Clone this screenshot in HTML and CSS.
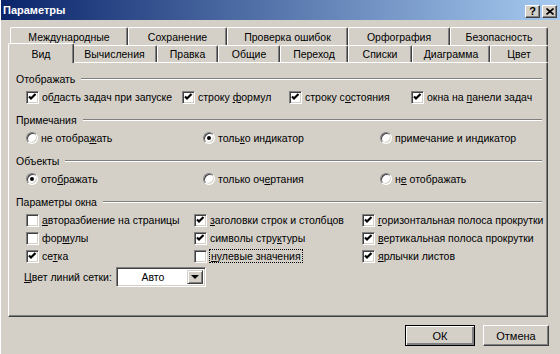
FILE: index.html
```html
<!DOCTYPE html>
<html lang="ru">
<head>
    <meta charset="UTF-8">
    <title>Параметры</title>
    <link rel="stylesheet" href="styles.css">
</head>
<body>
    <div class="window">
        <div class="titlebar">
            <span class="title">Параметры</span>
            <div class="caption-btns">
                <span class="cap-btn help">?</span>
                <span class="cap-btn close">
                    <svg width="8" height="7" viewBox="0 0 8 7"><path d="M0.5 0.5 L7.5 6.5 M7.5 0.5 L0.5 6.5" stroke="#000" stroke-width="1.6"/></svg>
                </span>
            </div>
        </div>

        <div class="tabs">
            <div class="tab-row back">
                <div class="tab">Международные</div>
                <div class="tab">Сохранение</div>
                <div class="tab">Проверка ошибок</div>
                <div class="tab">Орфография</div>
                <div class="tab">Безопасность</div>
            </div>
            <div class="tab-row front">
                <div class="tab active">Вид</div>
                <div class="tab">Вычисления</div>
                <div class="tab">Правка</div>
                <div class="tab">Общие</div>
                <div class="tab">Переход</div>
                <div class="tab">Списки</div>
                <div class="tab">Диаграмма</div>
                <div class="tab">Цвет</div>
            </div>
        </div>

        <div class="panel">
            <!-- Отображать -->
            <div class="group">
                <div class="group-head"><span>Отображать</span><i class="rule"></i></div>
                <div class="row cols-show">
                    <label class="opt"><span class="cb on"></span><span>об<u>л</u>асть задач при запуске</span></label>
                    <label class="opt"><span class="cb on"></span><span>строку <u>ф</u>ормул</span></label>
                    <label class="opt"><span class="cb on"></span><span>строку с<u>о</u>стояния</span></label>
                    <label class="opt"><span class="cb on"></span><span>окна на <u>п</u>анели задач</span></label>
                </div>
            </div>

            <!-- Примечания -->
            <div class="group">
                <div class="group-head"><span>Примечания</span><i class="rule"></i></div>
                <div class="row cols-three">
                    <label class="opt"><span class="rb"></span><span>не отобра<u>ж</u>ать</span></label>
                    <label class="opt"><span class="rb on"></span><span>толь<u>к</u>о индикатор</span></label>
                    <label class="opt"><span class="rb"></span><span>примечание и ин<u>д</u>икатор</span></label>
                </div>
            </div>

            <!-- Объекты -->
            <div class="group">
                <div class="group-head"><span>Объекты</span><i class="rule"></i></div>
                <div class="row cols-three">
                    <label class="opt"><span class="rb on"></span><span>ото<u>б</u>ражать</span></label>
                    <label class="opt"><span class="rb"></span><span>только оч<u>е</u>ртания</span></label>
                    <label class="opt"><span class="rb"></span><span>н<u>е</u> отображать</span></label>
                </div>
            </div>

            <!-- Параметры окна -->
            <div class="group">
                <div class="group-head"><span>Параметры окна</span><i class="rule"></i></div>
                <div class="row cols-window">
                    <label class="opt"><span class="cb"></span><span><u>а</u>вторазбиение на страницы</span></label>
                    <label class="opt"><span class="cb on"></span><span><u>з</u>аголовки строк и столбцов</span></label>
                    <label class="opt"><span class="cb on"></span><span><u>г</u>оризонтальная полоса прокрутки</span></label>
                </div>
                <div class="row cols-window">
                    <label class="opt"><span class="cb"></span><span>фор<u>м</u>улы</span></label>
                    <label class="opt"><span class="cb on"></span><span>символы стру<u>к</u>туры</span></label>
                    <label class="opt"><span class="cb on"></span><span><u>в</u>ертикальная полоса прокрутки</span></label>
                </div>
                <div class="row cols-window">
                    <label class="opt"><span class="cb on"></span><span>се<u>т</u>ка</span></label>
                    <label class="opt"><span class="cb"></span><span class="focus"><u>н</u>улевые значения</span></label>
                    <label class="opt"><span class="cb on"></span><span><u>я</u>рлычки листов</span></label>
                </div>
                <div class="color-row">
                    <span><u>Ц</u>вет линий сетки:</span>
                    <div class="combo">
                        <span class="combo-text">Авто</span>
                        <span class="combo-arrow"><i></i></span>
                    </div>
                </div>
            </div>
        </div>

        <div class="buttons">
            <button class="btn default">ОК</button>
            <button class="btn">Отмена</button>
        </div>
    </div>
</body>
</html>
```

FILE: styles.css
```css
* {
    box-sizing: border-box;
    margin: 0;
    padding: 0;
}

body {
    background-color: #d4d0c8;
    font-family: "Liberation Sans", Arial, sans-serif;
    font-size: 10.5px;
    color: #000;
}

.window {
    width: 560px;
    height: 354px;
    background: #d4d0c8;
    border-left: 1px solid #fff;
    overflow: hidden;
}

/* Title bar */
.titlebar {
    height: 20px;
    margin-left: -1px;
    display: flex;
    align-items: center;
    justify-content: space-between;
    padding: 0 3px 0 3px;
    background: linear-gradient(to right, #0a246a, #a6caf0);
}

.title {
    color: #fff;
    font-weight: bold;
    font-size: 11px;
}

.caption-btns {
    display: flex;
    gap: 2px;
    align-self: flex-end;
    margin-bottom: 2px;
}

.cap-btn {
    width: 15px;
    height: 13px;
    display: flex;
    align-items: center;
    justify-content: center;
    background: #d4d0c8;
    border-top: 1px solid #fff;
    border-left: 1px solid #fff;
    border-right: 1px solid #404040;
    border-bottom: 1px solid #404040;
    box-shadow: inset -1px -1px 0 #808080;
    font-weight: bold;
    font-size: 11px;
    line-height: 1;
}

/* Tabs */
.tabs {
    padding: 7px 0 0 9px;
}

.tab-row {
    display: grid;
}

.tab-row.back {
    grid-template-columns: 118px 99px 121px 102px 98px;
    height: 18px;
}

.tab-row.front {
    grid-template-columns: 62px 85px 61px 62px 68px 64px 78px 58px;
    height: 17px;
}

.tab {
    display: flex;
    align-items: center;
    justify-content: center;
    background: #d4d0c8;
    border-top: 1px solid #fff;
    border-left: 1px solid #fff;
    border-right: 1px solid #404040;
    box-shadow: inset -1px 0 0 #808080;
    border-top-left-radius: 2px;
    border-top-right-radius: 2px;
}

.tab.active {
    margin: -2px -2px -1px -2px;
    position: relative;
    z-index: 2;
}

/* Panel */
.panel {
    margin-left: 7px;
    width: 540px;
    height: 255px;
    border-top: 1px solid #fff;
    border-left: 1px solid #fff;
    border-right: 1px solid #404040;
    border-bottom: 1px solid #404040;
    box-shadow: inset -1px -1px 0 #808080;
    padding: 7px 5px 0 7px;
}

.group {
    margin-bottom: 5px;
}

.group-head {
    height: 18px;
    display: flex;
    align-items: center;
}

.rule {
    flex: 1;
    margin-left: 6px;
    border-top: 1px solid #808080;
    border-bottom: 1px solid #fff;
}

.row {
    display: grid;
    height: 18px;
    padding-left: 10px;
    align-items: center;
}

.cols-show {
    grid-template-columns: 156px 107px 122px 1fr;
}

.cols-three {
    grid-template-columns: 177px 177px 1fr;
}

.cols-window {
    grid-template-columns: 168px 168px 1fr;
}

.opt {
    display: flex;
    align-items: center;
    white-space: nowrap;
}

.cb {
    width: 13px;
    height: 13px;
    margin-right: 3px;
    flex: none;
    background: #fff;
    border-top: 1px solid #808080;
    border-left: 1px solid #808080;
    border-right: 1px solid #fff;
    border-bottom: 1px solid #fff;
    box-shadow: inset 1px 1px 0 #404040, inset -1px -1px 0 #d4d0c8;
}

.cb.on {
    background: #fff url("data:image/svg+xml;utf8,<svg xmlns='http://www.w3.org/2000/svg' width='11' height='11'><path d='M2 4.5 L4 6.5 L8.5 2' fill='none' stroke='black' stroke-width='2.2'/></svg>") center no-repeat;
}

.rb {
    width: 12px;
    height: 12px;
    margin-right: 3px;
    flex: none;
    border-radius: 50%;
    background: #fff;
    border-top: 1px solid #808080;
    border-left: 1px solid #808080;
    border-right: 1px solid #fff;
    border-bottom: 1px solid #fff;
    box-shadow: inset 1px 1px 0 #404040, inset -1px -1px 0 #d4d0c8;
    display: flex;
    align-items: center;
    justify-content: center;
}

.rb.on::after {
    content: "";
    width: 4px;
    height: 4px;
    border-radius: 50%;
    background: #000;
}

.focus {
    outline: 1px dotted #000;
    padding: 0 1px;
}

.color-row {
    display: flex;
    align-items: center;
    height: 22px;
    margin-top: 1px;
    padding-left: 8px;
    gap: 4px;
}

.combo {
    width: 90px;
    height: 20px;
    display: flex;
    background: #fff;
    border-top: 1px solid #808080;
    border-left: 1px solid #808080;
    border-right: 1px solid #fff;
    border-bottom: 1px solid #fff;
    box-shadow: inset 1px 1px 0 #404040, inset -1px -1px 0 #d4d0c8;
    padding: 2px;
}

.combo-text {
    flex: 1;
    display: flex;
    align-items: center;
    justify-content: center;
}

.combo-arrow {
    width: 16px;
    display: flex;
    align-items: center;
    justify-content: center;
    background: #d4d0c8;
    border-top: 1px solid #d4d0c8;
    border-left: 1px solid #d4d0c8;
    border-right: 1px solid #404040;
    border-bottom: 1px solid #404040;
    box-shadow: inset 1px 1px 0 #fff, inset -1px -1px 0 #808080;
}

.combo-arrow i {
    border-left: 4px solid transparent;
    border-right: 4px solid transparent;
    border-top: 4px solid #000;
}

/* Dialog buttons */
.buttons {
    display: flex;
    justify-content: flex-end;
    gap: 8px;
    padding: 8px 11px 0 0;
}

.btn {
    height: 21px;
    width: 66px;
    font-family: inherit;
    font-size: 11px;
    background: #d4d0c8;
    border-top: 1px solid #fff;
    border-left: 1px solid #fff;
    border-right: 1px solid #404040;
    border-bottom: 1px solid #404040;
    box-shadow: inset -1px -1px 0 #808080;
}

.btn.default {
    width: 70px;
    border: 1px solid #000;
    box-shadow: inset 1px 1px 0 #fff, inset -2px -2px 0 #808080;
}
```
